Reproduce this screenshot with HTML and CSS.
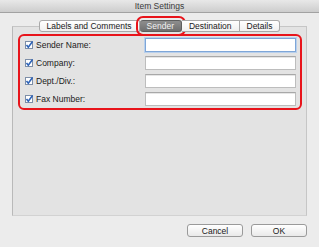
FILE: index.html
```html
<!DOCTYPE html>
<html lang="en">
<head>
    <meta charset="UTF-8">
    <title>Item Settings</title>
    <link rel="stylesheet" href="styles.css">
</head>
<body>
    <div class="window">
        <div class="titlebar">Item Settings</div>

        <div class="tabview">
            <div class="tabs">
                <div class="tab first">Labels and Comments</div>
                <div class="tab selected">Sender</div>
                <div class="tab">Destination</div>
                <div class="tab last">Details</div>
            </div>

            <div class="pane">
                <div class="group">
                    <div class="row">
                        <label class="check">
                            <svg width="8" height="8" viewBox="0 0 8 8"><rect x="0.5" y="0.5" width="7" height="7" fill="#fff" stroke="#7d8ea8"/><path d="M1.5 4 L3.3 6.2 L7.6 0.4" fill="none" stroke="#2f64b8" stroke-width="1.6"/></svg>
                            Sender Name:
                        </label>
                        <input type="text" class="field focused">
                    </div>
                    <div class="row">
                        <label class="check">
                            <svg width="8" height="8" viewBox="0 0 8 8"><rect x="0.5" y="0.5" width="7" height="7" fill="#fff" stroke="#7d8ea8"/><path d="M1.5 4 L3.3 6.2 L7.6 0.4" fill="none" stroke="#2f64b8" stroke-width="1.6"/></svg>
                            Company:
                        </label>
                        <input type="text" class="field">
                    </div>
                    <div class="row">
                        <label class="check">
                            <svg width="8" height="8" viewBox="0 0 8 8"><rect x="0.5" y="0.5" width="7" height="7" fill="#fff" stroke="#7d8ea8"/><path d="M1.5 4 L3.3 6.2 L7.6 0.4" fill="none" stroke="#2f64b8" stroke-width="1.6"/></svg>
                            Dept./Div.:
                        </label>
                        <input type="text" class="field">
                    </div>
                    <div class="row">
                        <label class="check">
                            <svg width="8" height="8" viewBox="0 0 8 8"><rect x="0.5" y="0.5" width="7" height="7" fill="#fff" stroke="#7d8ea8"/><path d="M1.5 4 L3.3 6.2 L7.6 0.4" fill="none" stroke="#2f64b8" stroke-width="1.6"/></svg>
                            Fax Number:
                        </label>
                        <input type="text" class="field">
                    </div>
                </div>
            </div>
        </div>

        <div class="buttons">
            <button class="btn">Cancel</button>
            <button class="btn">OK</button>
        </div>
    </div>
</body>
</html>
```

FILE: styles.css
```css
body {
    margin: 0;
    background-color: #ececec;
    font-family: "Liberation Sans", Arial, sans-serif;
    font-size: 8.5px;
    color: #1a1a1a;
}

.window {
    height: 247px;
    overflow: hidden;
}

.titlebar {
    height: 12px;
    line-height: 12px;
    text-align: center;
    font-size: 8.5px;
    color: #3a3a3a;
    background: linear-gradient(#e8e8e8, #cdcdcd);
    border-bottom: 1px solid #a2a2a2;
}

.tabview {
    margin: 7px 12px 0 12px;
}

.tabs {
    position: relative;
    z-index: 1;
    display: flex;
    justify-content: center;
    margin-bottom: -6px;
}

.tab {
    height: 10px;
    line-height: 10px;
    padding: 0 7px;
    background: linear-gradient(#ffffff, #f0f0f0);
    border: 1px solid #a9a9a9;
    border-left: none;
    color: #1a1a1a;
}

.tab.first {
    border-left: 1px solid #a9a9a9;
    border-radius: 3px 0 0 3px;
}

.tab.last {
    border-radius: 0 3px 3px 0;
}

.tab.selected {
    background: linear-gradient(#8e8e8e, #6f6f6f);
    border-color: #5e5e5e;
    color: #f2f2f2;
    outline: 2px solid #e8141b;
    outline-offset: 2px;
    border-radius: 3px;
}

.pane {
    height: 181px;
    padding: 7px 4px 0 5px;
    background-color: #e3e3e3;
    border: 1px solid #c6c6c6;
    border-left-color: #b9b9b9;
    border-bottom-color: #d2d2d2;
}

.group {
    display: flex;
    flex-direction: column;
    gap: 4px;
    padding: 2px 4px 2px 5px;
    border: 2px solid #e8141b;
    border-radius: 6px;
}

.row {
    display: flex;
    align-items: center;
    height: 14px;
}

.check {
    flex: 1;
    display: flex;
    align-items: center;
    gap: 3px;
}

.field {
    width: 151px;
    height: 14px;
    box-sizing: border-box;
    margin: 0;
    padding: 0;
    background-color: #fff;
    border: 1px solid #bdbdbd;
    border-top-color: #a8a8a8;
    box-shadow: inset 0 1px 0 #e6e6e6;
}

.field.focused {
    border: 1px solid #7ea6d8;
    box-shadow: 0 0 0 1px #b9d0ec;
}

.buttons {
    display: flex;
    justify-content: flex-end;
    gap: 8px;
    margin: 8px 12px 0 0;
}

.btn {
    width: 56px;
    height: 13px;
    padding: 0;
    font-family: "Liberation Sans", Arial, sans-serif;
    font-size: 8.5px;
    color: #1a1a1a;
    background: linear-gradient(#ffffff, #e9e9e9);
    border: 1px solid #9a9a9a;
    border-radius: 3px;
}
```
